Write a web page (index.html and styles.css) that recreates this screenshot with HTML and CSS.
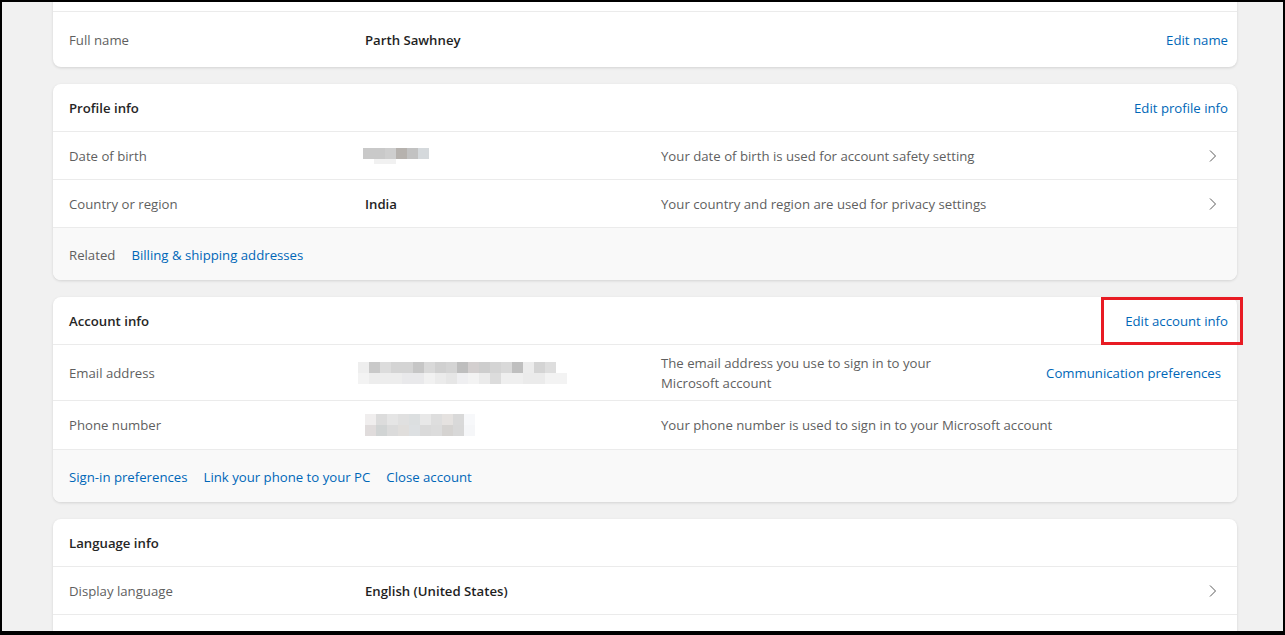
FILE: index.html
```html
<!DOCTYPE html>
<html lang="en">
<head>
  <meta charset="UTF-8">
  <meta name="viewport" content="width=device-width, initial-scale=1.0">
  <title>Your info</title>
  <link rel="stylesheet" href="styles.css">
</head>
<body>
  <div class="frame">
    <main class="page">

      <section class="card">
        <div class="card-head"></div>
        <div class="row row-name">
          <span class="label">Full name</span>
          <span class="value">Parth Sawhney</span>
          <span class="desc"></span>
          <a class="link edit" href="#">Edit name</a>
        </div>
      </section>

      <section class="card">
        <div class="card-head">
          <h2>Profile info</h2>
          <a class="link edit" href="#">Edit profile info</a>
        </div>
        <div class="row">
          <span class="label">Date of birth</span>
          <span class="value"><span class="blur blur-dob"></span></span>
          <span class="desc">Your date of birth is used for account safety setting</span>
          <svg class="chevron" viewBox="0 0 8 12" width="8" height="12"><path d="M1 0.5 L6.5 6 L1 11.5"/></svg>
        </div>
        <div class="row">
          <span class="label">Country or region</span>
          <span class="value">India</span>
          <span class="desc">Your country and region are used for privacy settings</span>
          <svg class="chevron" viewBox="0 0 8 12" width="8" height="12"><path d="M1 0.5 L6.5 6 L1 11.5"/></svg>
        </div>
        <div class="card-foot">
          <span class="label">Related</span>
          <a class="link" href="#">Billing &amp; shipping addresses</a>
        </div>
      </section>

      <section class="card">
        <div class="card-head">
          <h2>Account info</h2>
          <a class="link edit marked" href="#">Edit account info</a>
        </div>
        <div class="row row-tall">
          <span class="label">Email address</span>
          <span class="value"><span class="blur blur-email"></span></span>
          <span class="desc">The email address you use to sign in to your<br>Microsoft account</span>
          <a class="link" href="#">Communication preferences</a>
        </div>
        <div class="row row-phone">
          <span class="label">Phone number</span>
          <span class="value"><span class="blur blur-phone"></span></span>
          <span class="desc">Your phone number is used to sign in to your Microsoft account</span>
          <span></span>
        </div>
        <div class="card-foot">
          <a class="link" href="#">Sign-in preferences</a>
          <a class="link" href="#">Link your phone to your PC</a>
          <a class="link" href="#">Close account</a>
        </div>
      </section>

      <section class="card">
        <div class="card-head">
          <h2>Language info</h2>
        </div>
        <div class="row">
          <span class="label">Display language</span>
          <span class="value">English (United States)</span>
          <span class="desc"></span>
          <svg class="chevron" viewBox="0 0 8 12" width="8" height="12"><path d="M1 0.5 L6.5 6 L1 11.5"/></svg>
        </div>
        <div class="row"></div>
      </section>

    </main>
  </div>
</body>
</html>
```

FILE: styles.css
```css
html, body {
  margin: 0;
  padding: 0;
}

body {
  font-family: "Open Sans", "Noto Sans", sans-serif;
  font-size: 13.2px;
  color: #1b1b1b;
}

.frame {
  height: 635px;
  box-sizing: border-box;
  border: 2px solid #000;
  border-bottom-width: 4px;
  background-color: #f1f1f1;
  overflow: hidden;
}

.page {
  width: 1184px;
  margin: -38px 0 0 51px;
}

.card {
  background-color: #fff;
  border-radius: 8px;
  box-shadow: 0 1px 3px rgba(0, 0, 0, 0.13);
  margin-bottom: 17px;
}

.card-head {
  height: 47px;
  padding: 0 9px 0 16px;
  display: flex;
  align-items: center;
  justify-content: space-between;
  border-bottom: 1px solid #ebebeb;
}

.card-head h2 {
  margin: 0;
  font-size: 13.2px;
  font-weight: 600;
  color: #262626;
}

.row {
  display: grid;
  grid-template-columns: 296px 296px 1fr auto;
  align-items: center;
  height: 47px;
  padding: 0 16px;
  border-bottom: 1px solid #ebebeb;
}

.row:last-child {
  border-bottom: none;
}

.row-name {
  height: 54px;
  padding-top: 1px;
}

.row-tall {
  height: 55px;
}

.row-phone {
  height: 48px;
}

.label {
  color: #5f5f5f;
}

.value {
  font-weight: 600;
  color: #1f1f1f;
}

.desc {
  color: #5f5f5f;
  line-height: 20px;
}

.link {
  color: #0067b8;
  text-decoration: none;
}

.row .edit {
  margin-right: -7px;
}

.chevron {
  margin-right: 4px;
  fill: none;
  stroke: #5a5a5a;
  stroke-width: 1;
}

.card-foot {
  height: 52px;
  box-sizing: border-box;
  padding: 2px 16px 0;
  display: flex;
  align-items: center;
  gap: 16px;
  background-color: #f9f9f9;
  border-radius: 0 0 8px 8px;
}

/* annotation box around the highlighted link */
.marked {
  position: relative;
}

.marked::after {
  content: "";
  position: absolute;
  left: -24px;
  right: -15px;
  top: -15px;
  bottom: -15px;
  border: 3px solid #e81b23;
}

/* pixelated personal data */
.blur {
  display: block;
}

.blur-dob {
  width: 66px;
  height: 16px;
  margin-left: -2px;
  background:
    linear-gradient(90deg, #c9c9c9 0 22px, #cecece 22px 33px, #b6b2ae 33px 44px, #c2c2c2 44px 55px, #d5d9dc 55px) top / 100% 11px no-repeat,
    linear-gradient(90deg, transparent 0 11px, #f1f1f1 11px 33px, transparent 33px) bottom / 100% 5px no-repeat;
}

.blur-email {
  width: 209px;
  height: 22px;
  margin-left: -7px;
  background:
    linear-gradient(90deg, #eeeeee 0 11px, #c9c9c9 11px 22px, #dcdcdc 22px 33px, #d4d4d4 33px 55px, #c6c6c6 55px 66px, #d9d9d9 66px 77px, #d0d0d0 77px 88px, #d4d4d4 88px 99px, #bebebe 99px 110px, #d3cfcf 110px 121px, #cdcdcd 121px 132px, #d4d4d4 132px 143px, #d9d9d9 143px 154px, #bfbfbf 154px 165px, #ececec 165px 176px, #d4d4d4 176px 187px, #dedede 187px 198px, transparent 198px) top / 100% 11px no-repeat,
    linear-gradient(90deg, #f3f3f3 0 11px, #ededed 11px 44px, #e9e9eb 44px 66px, #f1f1f1 66px 77px, #ebebeb 77px 88px, #e6e6e6 88px 99px, #efeff1 99px 110px, #f3f3f3 110px 121px, #ebebeb 121px 132px, #dcdcdc 132px 143px, #efefef 143px 165px, #ebebeb 165px 187px, #f3f3f3 187px 209px) bottom / 100% 11px no-repeat;
}

.blur-phone {
  width: 110px;
  height: 22px;
  background:
    linear-gradient(90deg, #f0eeee 0 11px, #dcdcdc 11px 22px, #e5e5e5 22px 33px, #e0e0e0 33px 44px, #dcdfe0 44px 55px, #e8e8e8 55px 66px, #dedede 66px 77px, #e5e2e0 77px 88px, #d9d9d9 88px 99px, #f7f8fa 99px) top / 100% 11px no-repeat,
    linear-gradient(90deg, #e0dcdc 0 11px, #d1d4d4 11px 22px, #dbdbdb 22px 33px, #e0dedc 33px 44px, #dde0e2 44px 55px, #dadada 55px 66px, #dcdcdc 66px 77px, #d5d3d1 77px 88px, #d8d8d8 88px 99px, #f5f6f8 99px) bottom / 100% 11px no-repeat;
}
```
